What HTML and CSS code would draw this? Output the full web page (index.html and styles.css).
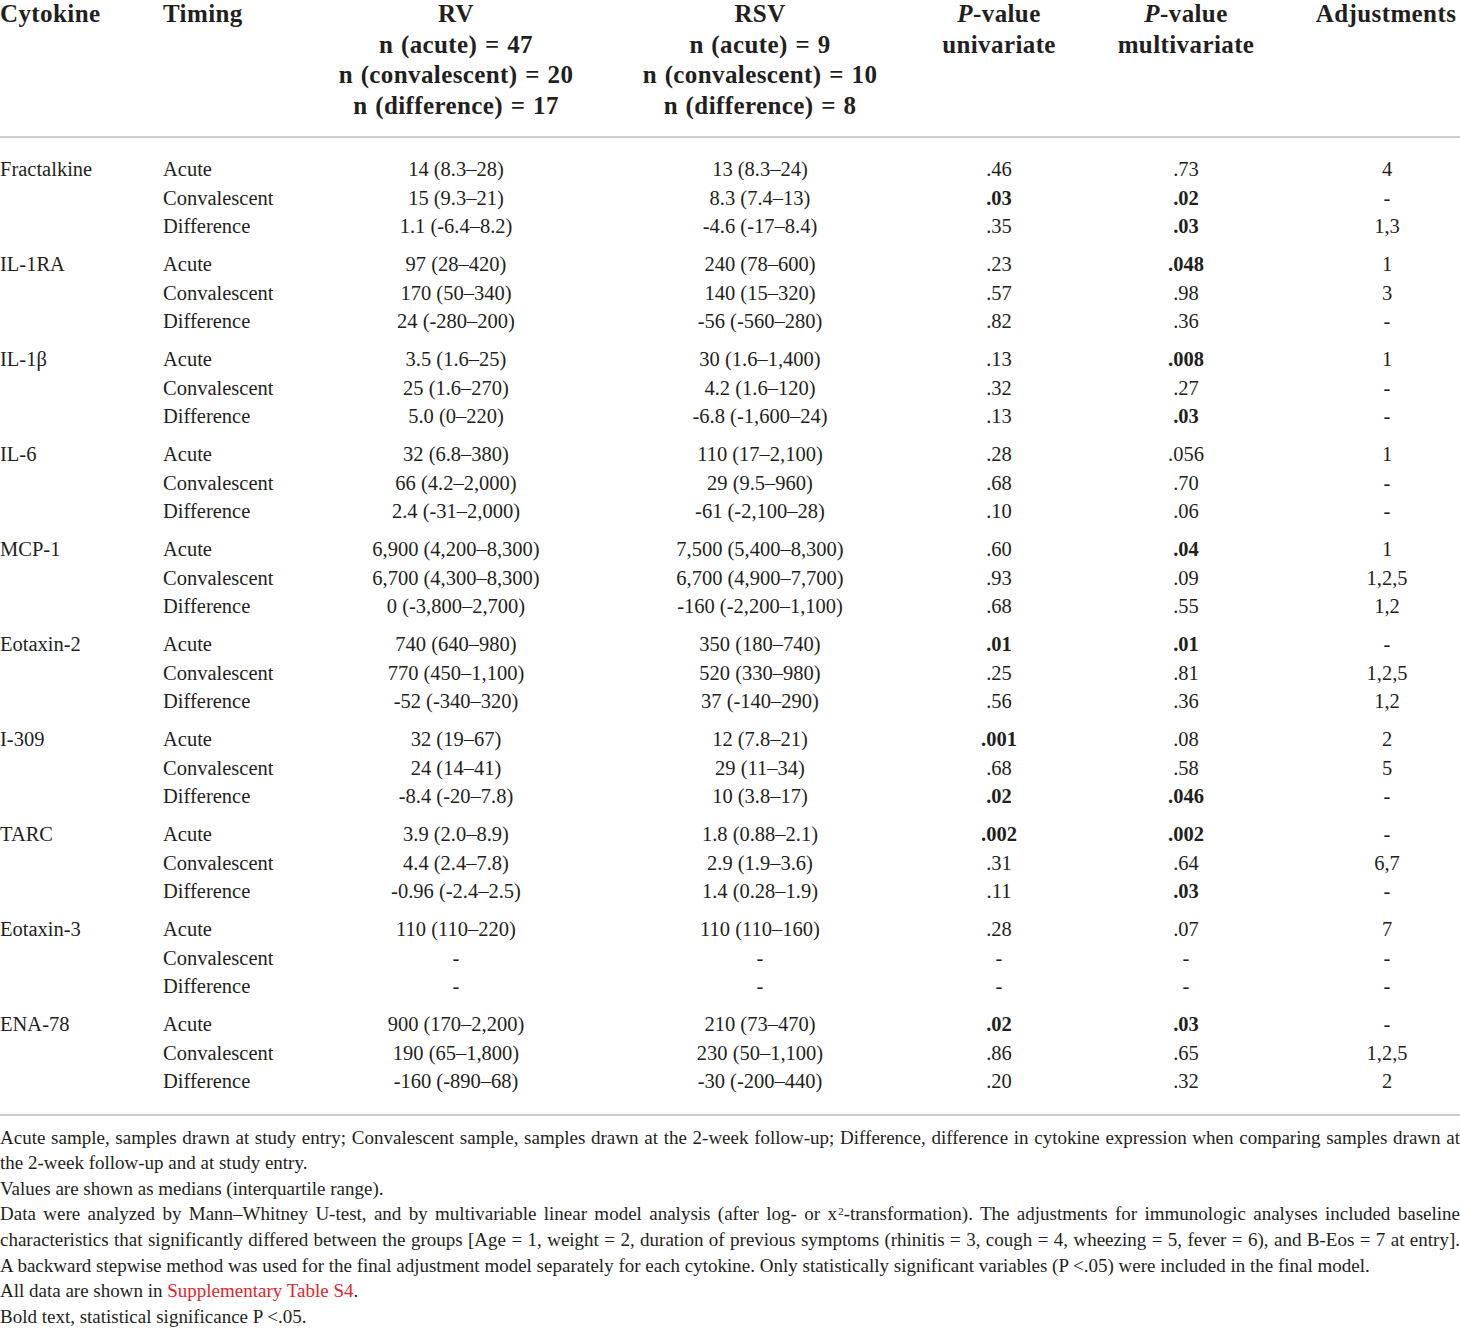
FILE: index.html
```html
<!DOCTYPE html>
<html lang="en">
<head>
<meta charset="utf-8">
<title>Cytokine table</title>
<link rel="stylesheet" href="styles.css">
</head>
<body>
<div class="page">
<table class="data">
  <colgroup>
    <col class="c-name">
    <col class="c-time">
    <col class="c-rv">
    <col class="c-rsv">
    <col class="c-uni">
    <col class="c-multi">
    <col class="c-adj">
  </colgroup>
  <thead>
    <tr>
      <th class="left">Cytokine</th>
      <th class="left">Timing</th>
      <th>RV<br>n (acute) = 47<br>n (convalescent) = 20<br>n (difference) = 17</th>
      <th>RSV<br>n (acute) = 9<br>n (convalescent) = 10<br>n (difference) = 8</th>
      <th><i>P</i>-value<br>univariate</th>
      <th><i>P</i>-value<br>multivariate</th>
      <th class="adj">Adjustments</th>
    </tr>
  </thead>
  <tbody class="group first">
    <tr><td class="left">Fractalkine</td><td class="left">Acute</td><td>14 (8.3–28)</td><td>13 (8.3–24)</td><td>.46</td><td>.73</td><td class="adj">4</td></tr>
    <tr><td></td><td class="left">Convalescent</td><td>15 (9.3–21)</td><td>8.3 (7.4–13)</td><td><b>.03</b></td><td><b>.02</b></td><td class="adj">-</td></tr>
    <tr><td></td><td class="left">Difference</td><td>1.1 (-6.4–8.2)</td><td>-4.6 (-17–8.4)</td><td>.35</td><td><b>.03</b></td><td class="adj">1,3</td></tr>
  </tbody>
  <tbody class="group">
    <tr><td class="left">IL-1RA</td><td class="left">Acute</td><td>97 (28–420)</td><td>240 (78–600)</td><td>.23</td><td><b>.048</b></td><td class="adj">1</td></tr>
    <tr><td></td><td class="left">Convalescent</td><td>170 (50–340)</td><td>140 (15–320)</td><td>.57</td><td>.98</td><td class="adj">3</td></tr>
    <tr><td></td><td class="left">Difference</td><td>24 (-280–200)</td><td>-56 (-560–280)</td><td>.82</td><td>.36</td><td class="adj">-</td></tr>
  </tbody>
  <tbody class="group">
    <tr><td class="left">IL-1β</td><td class="left">Acute</td><td>3.5 (1.6–25)</td><td>30 (1.6–1,400)</td><td>.13</td><td><b>.008</b></td><td class="adj">1</td></tr>
    <tr><td></td><td class="left">Convalescent</td><td>25 (1.6–270)</td><td>4.2 (1.6–120)</td><td>.32</td><td>.27</td><td class="adj">-</td></tr>
    <tr><td></td><td class="left">Difference</td><td>5.0 (0–220)</td><td>-6.8 (-1,600–24)</td><td>.13</td><td><b>.03</b></td><td class="adj">-</td></tr>
  </tbody>
  <tbody class="group">
    <tr><td class="left">IL-6</td><td class="left">Acute</td><td>32 (6.8–380)</td><td>110 (17–2,100)</td><td>.28</td><td>.056</td><td class="adj">1</td></tr>
    <tr><td></td><td class="left">Convalescent</td><td>66 (4.2–2,000)</td><td>29 (9.5–960)</td><td>.68</td><td>.70</td><td class="adj">-</td></tr>
    <tr><td></td><td class="left">Difference</td><td>2.4 (-31–2,000)</td><td>-61 (-2,100–28)</td><td>.10</td><td>.06</td><td class="adj">-</td></tr>
  </tbody>
  <tbody class="group">
    <tr><td class="left">MCP-1</td><td class="left">Acute</td><td>6,900 (4,200–8,300)</td><td>7,500 (5,400–8,300)</td><td>.60</td><td><b>.04</b></td><td class="adj">1</td></tr>
    <tr><td></td><td class="left">Convalescent</td><td>6,700 (4,300–8,300)</td><td>6,700 (4,900–7,700)</td><td>.93</td><td>.09</td><td class="adj">1,2,5</td></tr>
    <tr><td></td><td class="left">Difference</td><td>0 (-3,800–2,700)</td><td>-160 (-2,200–1,100)</td><td>.68</td><td>.55</td><td class="adj">1,2</td></tr>
  </tbody>
  <tbody class="group">
    <tr><td class="left">Eotaxin-2</td><td class="left">Acute</td><td>740 (640–980)</td><td>350 (180–740)</td><td><b>.01</b></td><td><b>.01</b></td><td class="adj">-</td></tr>
    <tr><td></td><td class="left">Convalescent</td><td>770 (450–1,100)</td><td>520 (330–980)</td><td>.25</td><td>.81</td><td class="adj">1,2,5</td></tr>
    <tr><td></td><td class="left">Difference</td><td>-52 (-340–320)</td><td>37 (-140–290)</td><td>.56</td><td>.36</td><td class="adj">1,2</td></tr>
  </tbody>
  <tbody class="group">
    <tr><td class="left">I-309</td><td class="left">Acute</td><td>32 (19–67)</td><td>12 (7.8–21)</td><td><b>.001</b></td><td>.08</td><td class="adj">2</td></tr>
    <tr><td></td><td class="left">Convalescent</td><td>24 (14–41)</td><td>29 (11–34)</td><td>.68</td><td>.58</td><td class="adj">5</td></tr>
    <tr><td></td><td class="left">Difference</td><td>-8.4 (-20–7.8)</td><td>10 (3.8–17)</td><td><b>.02</b></td><td><b>.046</b></td><td class="adj">-</td></tr>
  </tbody>
  <tbody class="group">
    <tr><td class="left">TARC</td><td class="left">Acute</td><td>3.9 (2.0–8.9)</td><td>1.8 (0.88–2.1)</td><td><b>.002</b></td><td><b>.002</b></td><td class="adj">-</td></tr>
    <tr><td></td><td class="left">Convalescent</td><td>4.4 (2.4–7.8)</td><td>2.9 (1.9–3.6)</td><td>.31</td><td>.64</td><td class="adj">6,7</td></tr>
    <tr><td></td><td class="left">Difference</td><td>-0.96 (-2.4–2.5)</td><td>1.4 (0.28–1.9)</td><td>.11</td><td><b>.03</b></td><td class="adj">-</td></tr>
  </tbody>
  <tbody class="group">
    <tr><td class="left">Eotaxin-3</td><td class="left">Acute</td><td>110 (110–220)</td><td>110 (110–160)</td><td>.28</td><td>.07</td><td class="adj">7</td></tr>
    <tr><td></td><td class="left">Convalescent</td><td>-</td><td>-</td><td>-</td><td>-</td><td class="adj">-</td></tr>
    <tr><td></td><td class="left">Difference</td><td>-</td><td>-</td><td>-</td><td>-</td><td class="adj">-</td></tr>
  </tbody>
  <tbody class="group last">
    <tr><td class="left">ENA-78</td><td class="left">Acute</td><td>900 (170–2,200)</td><td>210 (73–470)</td><td><b>.02</b></td><td><b>.03</b></td><td class="adj">-</td></tr>
    <tr><td></td><td class="left">Convalescent</td><td>190 (65–1,800)</td><td>230 (50–1,100)</td><td>.86</td><td>.65</td><td class="adj">1,2,5</td></tr>
    <tr><td></td><td class="left">Difference</td><td>-160 (-890–68)</td><td>-30 (-200–440)</td><td>.20</td><td>.32</td><td class="adj">2</td></tr>
  </tbody>
</table>
<div class="notes">
  <p>Acute sample, samples drawn at study entry; Convalescent sample, samples drawn at the 2-week follow-up; Difference, difference in cytokine expression when comparing samples drawn at the 2-week follow-up and at study entry.</p>
  <p>Values are shown as medians (interquartile range).</p>
  <p class="full">Data were analyzed by Mann–Whitney U-test, and by multivariable linear model analysis (after log- or x<sup>2</sup>-transformation). The adjustments for immunologic analyses included baseline characteristics that significantly differed between the groups [Age = 1, weight = 2, duration of previous symptoms (rhinitis = 3, cough = 4, wheezing = 5, fever = 6), and B-Eos = 7 at entry].</p>
  <p>A backward stepwise method was used for the final adjustment model separately for each cytokine. Only statistically significant variables (P &lt;.05) were included in the final model.</p>
  <p>All data are shown in <a class="ref" href="#">Supplementary Table S4</a>.</p>
  <p>Bold text, statistical significance P &lt;.05.</p>
</div>
</div>
</body>
</html>
```
FILE: styles.css
```css
html, body {
  margin: 0;
  padding: 0;
  background: #ffffff;
}

body {
  font-family: "Liberation Serif", "Times New Roman", serif;
  color: #231f20;
  width: 1460px;
}

.page {
  width: 1460px;
  overflow: hidden;
}

.data {
  width: 1460px;
  table-layout: fixed;
  border-collapse: collapse;
  margin-top: -1px;
}

.c-name { width: 163px; }
.c-time { width: 137px; }
.c-rv { width: 312px; }
.c-rsv { width: 296px; }
.c-uni { width: 182px; }
.c-multi { width: 192px; }
.c-adj { width: 178px; }

.data th {
  font-size: 25px;
  line-height: 30.5px;
  letter-spacing: 0.4px;
  word-spacing: 1px;
  font-weight: bold;
  text-align: center;
  vertical-align: top;
  padding: 0 0 15px 0;
  border-bottom: 2px solid #cdcdcd;
  white-space: nowrap;
}

.data th i {
  font-style: italic;
}

.data td {
  font-size: 20.5px;
  line-height: 28.7px;
  padding: 0;
  text-align: center;
  vertical-align: top;
  white-space: nowrap;
}

.data .left {
  text-align: left;
}

.data .adj {
  padding-left: 32px;
}

.data th.adj {
  padding-left: 30px;
}

.data td b {
  font-weight: bold;
}

.group tr:first-child td {
  padding-top: 8.9px;
}

.group.first tr:first-child td {
  padding-top: 17px;
}

.group.last tr:last-child td {
  padding-bottom: 17.5px;
}

.notes {
  border-top: 2px solid #cdcdcd;
  padding-top: 9px;
  font-size: 19px;
  line-height: 25.6px;
}

.notes p {
  margin: 0;
  text-align: justify;
}

.notes p.full {
  text-align-last: justify;
}

.notes sup {
  font-size: 0.6em;
  line-height: 0;
  vertical-align: 0.5em;
  margin-left: 1px;
}

.ref {
  color: #e2252b;
  text-decoration: none;
}
```
